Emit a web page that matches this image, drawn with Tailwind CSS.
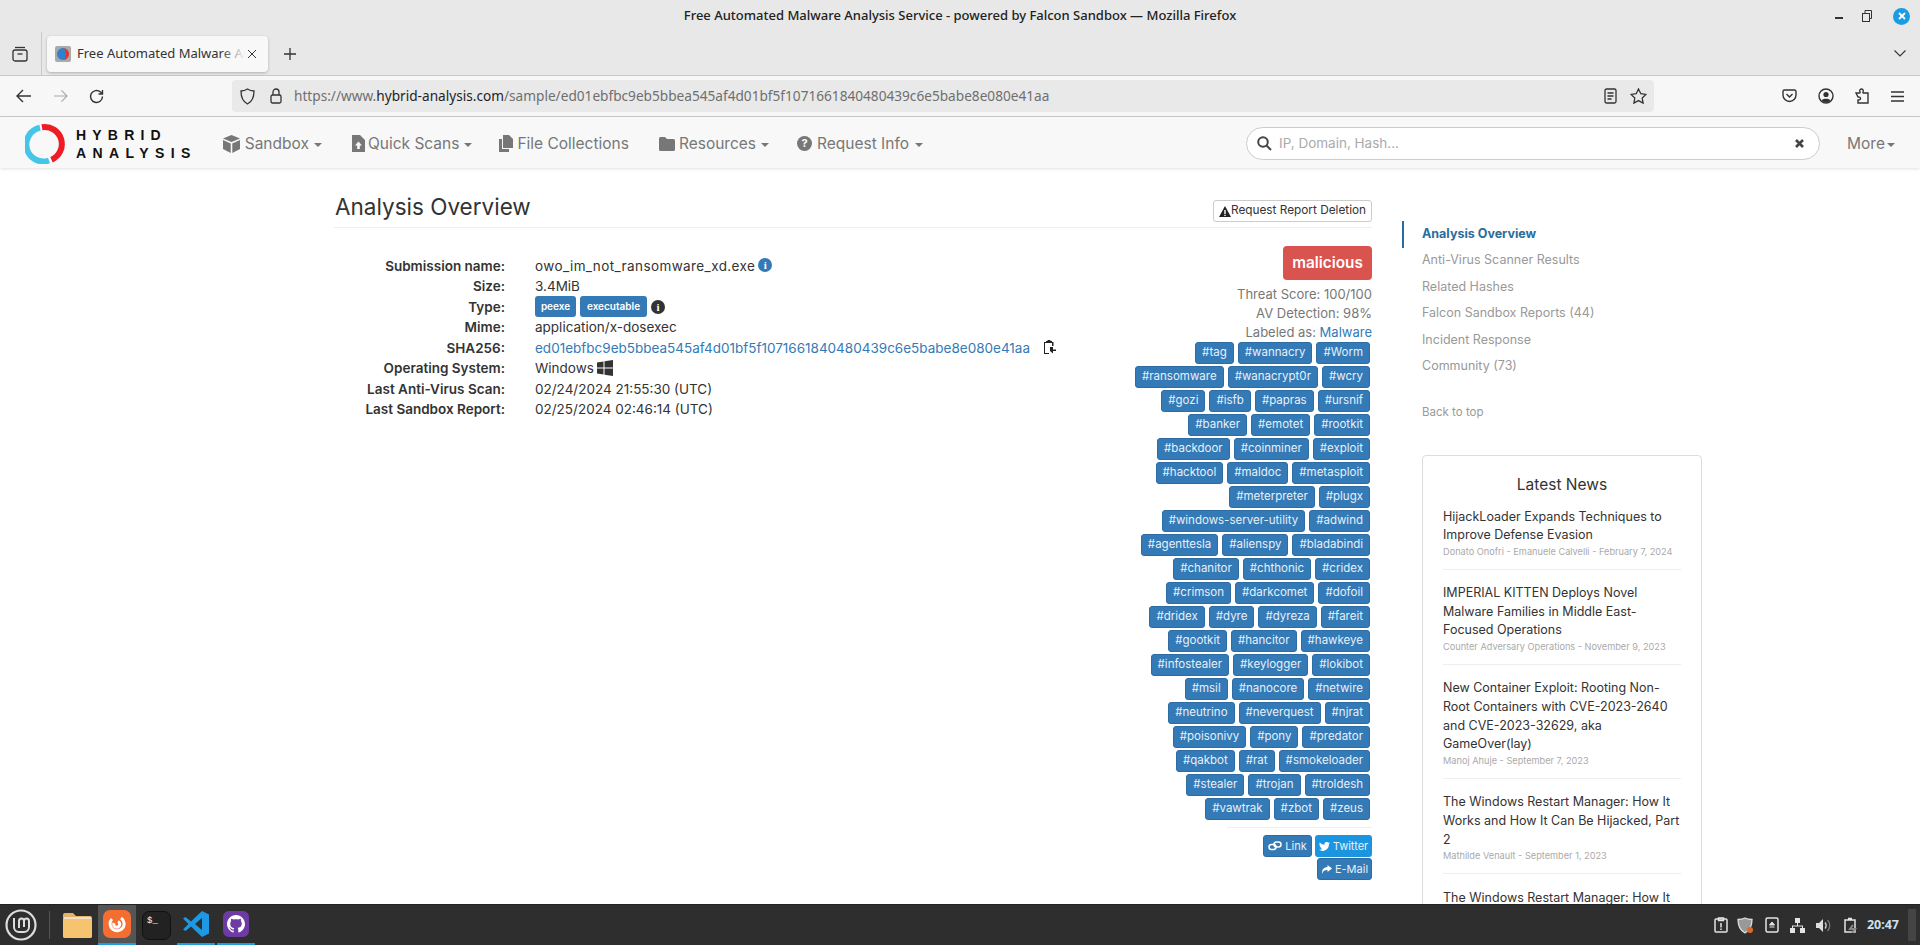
<!DOCTYPE html>
<html lang="en">
<head>
<meta charset="UTF-8">
<title>Free Automated Malware Analysis Service - powered by Falcon Sandbox</title>
<script src="https://cdn.jsdelivr.net/npm/@tailwindcss/browser@4"></script>
</head>
<body class="h-[945px] w-[1920px] overflow-hidden flex flex-col bg-white font-['Inter',sans-serif] text-[#333]">

<!-- window title + tabs -->
<div class="h-[76px] shrink-0 bg-[#e8e8e8] border-b border-[#c9c9c9] font-['Noto_Sans',sans-serif] flex flex-col">
  <div class="h-[32px] grid grid-cols-[1fr_auto_1fr] items-center">
    <div></div>
    <div class="text-[13px] font-medium text-[#222] whitespace-nowrap">Free Automated Malware Analysis Service - powered by Falcon Sandbox — Mozilla Firefox</div>
    <div class="flex items-center justify-end pr-[10px] gap-[19px]">
      <div class="w-[8px] h-[1.5px] bg-[#333] mt-[4px]"></div>
      <svg width="10" height="12" viewBox="0 0 10 12" fill="none" stroke="#333" stroke-width="1"><rect x="0.5" y="3.5" width="7" height="8"/><path d="M3 3V.5h6.5v8H8"/></svg>
      <div class="w-[17px] h-[17px] ml-[2px] rounded-full bg-[#1c9ce0] text-white flex items-center justify-center">
        <svg width="8" height="8" viewBox="0 0 8 8" stroke="#fff" stroke-width="1.8"><path d="M1 1l6 6M7 1L1 7"/></svg>
      </div>
    </div>
  </div>
  <div class="flex-1 flex items-start">
    <div class="w-[42px] h-[43px] border-r border-[#c9c9c9] flex items-center pl-[12px]">
      <svg width="16" height="16" viewBox="0 0 16 16" fill="none" stroke="#333" stroke-width="1.3"><path d="M3 1.5h10"/><rect x="1" y="4" width="14" height="11" rx="2"/><path d="M5.5 8h5"/></svg>
    </div>
    <div class="ml-[5px] mt-[4px] w-[221px] h-[36px] bg-[#f8f8f8] rounded-[4px] shadow-[0_1px_3px_rgba(0,0,0,0.25)] flex items-center pl-[8px]">
      <div class="w-[16px] h-[16px] bg-[#aaa] rounded-[2px] flex items-center justify-center">
        <div class="w-[12px] h-[12px] rounded-full bg-[#2f82c9] border-r-[3px] border-[#e5322d]"></div>
      </div>
      <div class="relative w-[168px] ml-[6px] overflow-hidden whitespace-nowrap text-[13px] text-[#333]">Free Automated Malware Analysis<div class="absolute right-0 top-0 h-full w-[24px] bg-gradient-to-r from-transparent to-[#f8f8f8]"></div></div>
      <svg class="ml-[2px]" width="10" height="10" viewBox="0 0 10 10" stroke="#333" stroke-width="1"><path d="M1 1l8 8M9 1L1 9"/></svg>
    </div>
    <svg class="ml-[15px] mt-[15px]" width="14" height="14" viewBox="0 0 14 14" stroke="#333" stroke-width="1.3"><path d="M7 1v12M1 7h12"/></svg>
    <svg class="ml-auto mr-[14px] mt-[18px]" width="12" height="7" viewBox="0 0 12 7" fill="none" stroke="#333" stroke-width="1.1"><path d="M.5.5L6 6l5.5-5.5"/></svg>
  </div>
</div>

<!-- url toolbar -->
<div class="h-[41px] shrink-0 bg-[#f7f7f7] border-b border-[#c9c9c9] flex items-center font-['Noto_Sans',sans-serif]">
  <svg class="ml-[16px]" width="16" height="14" viewBox="0 0 16 14" fill="none" stroke="#333" stroke-width="1.4"><path d="M15 7H1.5M7 1L1 7l6 6"/></svg>
  <svg class="ml-[21px]" width="15" height="14" viewBox="0 0 16 14" fill="none" stroke="#aaa" stroke-width="1.3"><path d="M1 7h13.5M9 1l6 6-6 6"/></svg>
  <svg class="ml-[21px]" width="15" height="15" viewBox="0 0 15 15" fill="none" stroke="#333" stroke-width="1.4"><path d="M13.5 7.5a6 6 0 1 1-2-4.5L13.5 5M13.5 1v4h-4"/></svg>
  <div class="ml-[128px] w-[1422px] h-[32px] bg-[#e9e9e9] rounded-[4px] flex items-center pl-[8px]">
    <svg width="15" height="17" viewBox="0 0 15 17" fill="none" stroke="#333" stroke-width="1.3"><path d="M7.5 1C5.5 2.3 3.5 3 1 3c0 6 1.500 10.500 6.500 13C12.500 13.500 14 9 14 3c-2.500 0-4.500-.7-6.500-2z"/></svg>
    <svg class="ml-[15px]" width="12" height="16" viewBox="0 0 12 16" fill="none" stroke="#333" stroke-width="1.3"><rect x="1" y="7" width="10" height="8" rx="1.500"/><path d="M3 7V4a3 3 0 0 1 6 0v3"/></svg>
    <div class="ml-[12px] text-[13.650px] text-[#6f6f6f] whitespace-nowrap">https://www.<span class="text-[#1f1f1f]">hybrid-analysis.com</span>/sample/ed01ebfbc9eb5bbea545af4d01bf5f1071661840480439c6e5babe8e080e41aa</div>
    <svg class="ml-auto" width="13" height="16" viewBox="0 0 13 16" fill="none" stroke="#333" stroke-width="1.3"><rect x="1" y="1" width="11" height="14" rx="1.500"/><path d="M3.500 5h6M3.500 8h6M3.500 11h4"/></svg>
    <svg class="ml-[13px] mr-[7px]" width="17" height="16" viewBox="0 0 17 16" fill="none" stroke="#333" stroke-width="1.3"><path d="M8.500 1l2.300 4.700 5.200.7-3.800 3.600.9 5.100-4.600-2.500-4.600 2.500.9-5.100L1 6.400l5.200-.7z"/></svg>
  </div>
  <svg class="ml-[128px]" width="15" height="14" viewBox="0 0 15 14" fill="none" stroke="#333" stroke-width="1.4"><path d="M1 2.500A1.500 1.500 0 0 1 2.500 1h10A1.500 1.500 0 0 1 14 2.500V6a6.500 6.500 0 0 1-13 0z"/><path d="M4.500 5l3 3 3-3"/></svg>
  <svg class="ml-[21px]" width="16" height="16" viewBox="0 0 16 16"><circle cx="8" cy="8" r="7" fill="none" stroke="#333" stroke-width="1.4"/><circle cx="8" cy="6.500" r="2.600" fill="#333"/><path d="M3.500 12.500c1-2.500 8-2.500 9 0a6 6 0 0 1-9 0z" fill="#333"/></svg>
  <svg class="ml-[21px]" width="14" height="16" viewBox="0 0 14 16" fill="none" stroke="#333" stroke-width="1.4"><path d="M1 5h3.500c.7 0 .7-.8.400-1.500C4.400 2 5.500 1 6.500 1s2.100 1 1.600 2.500C7.800 4.200 7.800 5 8.500 5H13v10H3v-3c1.500.3 2.500-.5 2.500-1.500S4.500 8.700 3 9z"/></svg>
  <svg class="ml-[22px]" width="13" height="11" viewBox="0 0 13 11" stroke="#333" stroke-width="1.300"><path d="M0 1h13M0 5.500h13M0 10h13"/></svg>
</div>

<!-- site nav -->
<div class="relative z-10 h-[51px] shrink-0 bg-[#f8f8f8] shadow-[0_1px_3px_rgba(0,0,0,0.12)] flex items-center text-[#777] text-[15.500px] pt-[2px]">
  <svg class="ml-[25px]" width="40" height="40" viewBox="0 0 40 40" fill="none" stroke-width="6"><path d="M15 3.800A17 17 0 1 0 24 36.500" stroke="#45c6e8"/><path d="M17 3.300A17 17 0 0 1 26.500 35.700" stroke="#ee1c25"/></svg>
  <div class="ml-[11px] font-['Liberation_Sans',sans-serif] font-bold text-[#111] text-[14px] leading-[18px] tracking-[6.200px]">
    <div>HYBRID</div>
    <div class="tracking-[6.400px]">ANALYSIS</div>
  </div>
  <svg class="ml-[26px]" width="17" height="18" viewBox="0 0 17 18" fill="#777"><path d="M8.500 0L17 3.500 8.500 7 0 3.500z"/><path d="M0 5v9l7.700 4V8.500zM17 5v9l-7.700 4V8.500z"/></svg>
  <span class="ml-[5px]">Sandbox</span><span class="ml-[5px] mt-[2px] border-x-[4px] border-t-[4px] border-x-transparent border-t-[#777]"></span>
  <svg class="ml-[30px]" width="13" height="17" viewBox="0 0 13 17" fill="#777"><path fill-rule="evenodd" d="M0 0h8l5 5v12H0zM6.500 6.500L3 10.500h2.200V14h2.600v-3.500H10z"/></svg>
  <span class="ml-[3px]">Quick Scans</span><span class="ml-[5px] mt-[2px] border-x-[4px] border-t-[4px] border-x-transparent border-t-[#777]"></span>
  <svg class="ml-[27px]" width="14" height="17" viewBox="0 0 14 17" fill="#777"><path d="M4 0h6l4 4v9H4z"/><path d="M0 4h3v10h7v3H0z"/></svg>
  <span class="ml-[4px]">File Collections</span>
  <svg class="ml-[30px]" width="16" height="14" viewBox="0 0 16 14" fill="#777"><path d="M1.500 0h4.500l2 2h6.500A1.500 1.500 0 0 1 16 3.500v9a1.500 1.500 0 0 1-1.500 1.500h-13A1.500 1.500 0 0 1 0 12.500v-11A1.500 1.500 0 0 1 1.500 0z"/></svg>
  <span class="ml-[4px]">Resources</span><span class="ml-[5px] mt-[2px] border-x-[4px] border-t-[4px] border-x-transparent border-t-[#777]"></span>
  <span class="ml-[28px] w-[15px] h-[15px] rounded-full bg-[#777] text-white text-[11px] font-bold flex items-center justify-center">?</span>
  <span class="ml-[5px]">Request Info</span><span class="ml-[6px] mt-[2px] border-x-[4px] border-t-[4px] border-x-transparent border-t-[#777]"></span>
  <div class="ml-[323px] w-[574px] h-[33px] bg-white border border-[#ccc] rounded-full flex items-center pl-[10px] pr-[15px] text-[13.500px] text-[#aaa]">
    <svg width="15" height="15" viewBox="0 0 15 15" fill="none" stroke="#444" stroke-width="2"><circle cx="6" cy="6" r="4.800"/><path d="M9.500 9.500l4.500 4.500"/></svg>
    <span class="ml-[7px]">IP, Domain, Hash...</span>
    <svg class="ml-auto" width="9" height="9" viewBox="0 0 9 9" stroke="#444" stroke-width="2.600"><path d="M1 1l7 7M8 1L1 8"/></svg>
  </div>
  <span class="ml-[27px]">More</span><span class="ml-[2px] mt-[2px] border-x-[4px] border-t-[4px] border-x-transparent border-t-[#777]"></span>
</div>

<!-- page -->
<div class="flex-1 min-h-0 overflow-hidden flex pl-[334px]">
  <div class="w-[1038px] shrink-0">
    <div class="h-[60px] border-b border-[#eee] flex justify-between">
      <h1 class="ml-[1px] mt-[23px] text-[22.500px] leading-[32px] text-[#333]">Analysis Overview</h1>
      <button class="mt-[32px] h-[22px] w-[159px] border border-[#ccc] rounded-[3px] bg-white text-[11.800px] text-[#333] flex items-center justify-center">
        <svg width="12" height="11" viewBox="0 0 12 11"><path fill-rule="evenodd" d="M6 0l6 11H0zM5.300 4v4h1.400V4zM5.300 8.700v1.200h1.400V8.700z" fill="#222"/></svg>Request Report Deletion
      </button>
    </div>
    <div class="flex justify-between">
      <div class="mt-[27.500px] grid grid-cols-[171px_auto] gap-x-[30px] auto-rows-[20.500px] items-center text-[13.500px] h-fit">
        <div class="text-right font-semibold">Submission name:</div>
        <div class="flex items-center gap-[3px]"><span class="tracking-[0.400px]">owo_im_not_ransomware_xd.exe</span> <span class="w-[14px] h-[14px] mb-[2px] rounded-full bg-[#337ab7] text-white text-[11px] font-bold flex items-center justify-center font-['Liberation_Serif',serif]">i</span></div>
        <div class="text-right font-semibold">Size:</div>
        <div>3.4MiB</div>
        <div class="text-right font-semibold">Type:</div>
        <div class="flex items-center gap-[4px]">
          <span class="h-[21px] w-[41px] bg-[#337ab7] rounded-[3px] text-white text-[10px] font-semibold flex items-center justify-center">peexe</span>
          <span class="h-[21px] w-[67px] bg-[#337ab7] rounded-[3px] text-white text-[10px] font-semibold flex items-center justify-center">executable</span>
          <span class="w-[14px] h-[14px] mt-[1px] rounded-full bg-[#333] text-white text-[11px] font-bold flex items-center justify-center font-['Liberation_Serif',serif]">i</span>
        </div>
        <div class="text-right font-semibold">Mime:</div>
        <div>application/x-dosexec</div>
        <div class="text-right font-semibold">SHA256:</div>
        <div class="flex items-center text-[#337ab7] whitespace-nowrap">ed01ebfbc9eb5bbea545af4d01bf5f1071661840480439c6e5babe8e080e41aa
          <svg class="ml-[13px]" width="13" height="15" viewBox="0 0 13 15"><path fill-rule="evenodd" d="M3 1h1.500a1.500 1.500 0 0 1 3 0H9v1h1.500v4H9V3H2v10h4v1H1V2h2z" fill="#222"/><path d="M7 7h3v2.500h3v1.500h-3v2.500L7 11z" fill="#222"/></svg>
        </div>
        <div class="text-right font-semibold">Operating System:</div>
        <div class="flex items-center gap-[3px]">Windows
          <svg width="16" height="16" viewBox="0 0 16 16" fill="#333"><path d="M0 2.500l6.500-1v6H0zM7.500 1.300L16 0v7.500H7.500zM0 8.500h6.500v6l-6.500-1zM7.500 8.500H16V16l-8.500-1.300z"/></svg>
        </div>
        <div class="text-right font-semibold">Last Anti-Virus Scan:</div>
        <div>02/24/2024 21:55:30 (UTC)</div>
        <div class="text-right font-semibold">Last Sandbox Report:</div>
        <div>02/25/2024 02:46:14 (UTC)</div>
      </div>
      <div class="mt-[18px] w-[260px] flex flex-col items-end">
        <div class="h-[34px] w-[89px] bg-[#d9534f] rounded-[4px] text-white text-[15.300px] font-semibold flex items-center justify-center">malicious</div>
        <div class="mt-[5px] text-right text-[13px] leading-[19px] text-[#777] whitespace-nowrap">
          <div>Threat Score: 100/100</div>
          <div>AV Detection: 98%</div>
          <div>Labeled as: <span class="text-[#337ab7]">Malware</span></div>
        </div>
        <div id="tags" class="mt-[0px] pr-[2px] flex flex-col items-end gap-[2px]"></div>
        <div class="mt-[7px] w-[145px] border-t border-[#eee]"></div>
        <div class="mt-[7px] flex gap-[3px] text-[11px] text-[#e8f0f7]">
          <span class="h-[22px] w-[49px] bg-[#337ab7] border border-[#2e6da4] rounded-[3px] flex items-center justify-center gap-[3px]">
            <svg width="14" height="10" viewBox="0 0 14 10" fill="none" stroke="#fff" stroke-width="1.500"><rect x="1" y="3.500" width="7" height="5" rx="2.500"/><rect x="6" y="1" width="7" height="5" rx="2.500"/></svg>Link</span>
          <span class="h-[22px] w-[57px] bg-[#1b95e0] rounded-[3px] flex items-center justify-center gap-[3px]">
            <svg width="11" height="9" viewBox="0 0 11 9" fill="#fff"><path d="M11 1.100c-.4.200-.8.300-1.300.4.500-.3.800-.7 1-1.200-.4.300-.9.400-1.400.5A2.200 2.200 0 0 0 5.500 2.800 6.400 6.400 0 0 1 .8.400a2.200 2.200 0 0 0 .7 3c-.4 0-.7-.1-1-.3 0 1.100.8 2 1.800 2.200-.3.100-.7.100-1 0 .3.900 1.100 1.500 2.100 1.500A4.500 4.500 0 0 1 0 7.800 6.400 6.400 0 0 0 9.900 2.200c.4-.3.800-.7 1.100-1.100z"/></svg>Twitter</span>
        </div>
        <span class="mt-[1px] h-[22px] w-[55px] bg-[#337ab7] border border-[#2e6da4] rounded-[3px] flex items-center justify-center gap-[3px] text-[11px] text-[#e8f0f7]">
          <svg width="11" height="9" viewBox="0 0 11 9" fill="#fff"><path d="M6.500 0L11 3.500 6.500 7V5C3.500 5 2 5.800 1.500 9 .5 5.500 2 2.300 6.500 2z"/></svg>E-Mail</span>
      </div>
    </div>
  </div>

  <div class="ml-[30px] w-[300px] shrink-0 pt-[52.500px]">
    <div id="toc" class="text-[12.500px] text-[#999]">
      <div class="h-[27px] border-l-2 border-[#2a6d9e] pl-[18px] flex items-center font-bold text-[#2a6d9e]">Analysis Overview</div>
      <div class="h-[26.500px] pl-[20px] flex items-center">Anti-Virus Scanner Results</div>
      <div class="h-[26.500px] pl-[20px] flex items-center">Related Hashes</div>
      <div class="h-[26.500px] pl-[20px] flex items-center">Falcon Sandbox Reports (44)</div>
      <div class="h-[26.500px] pl-[20px] flex items-center">Incident Response</div>
      <div class="h-[26.500px] pl-[20px] flex items-center">Community (73)</div>
      <div class="mt-[19.500px] h-[26px] pl-[20px] flex items-center text-[11.500px]">Back to top</div>
    </div>
    <div class="mt-[29px] ml-[20px] w-[280px] border border-[#ddd] rounded-[4px] px-[20px] pt-[18px]">
      <div class="text-center text-[15.500px] leading-[22px] text-[#333]">Latest News</div>
      <div class="mt-[12px] text-[12.500px] leading-[18.600px] text-[#333]">
        <div class="pb-[10px] mb-[14.500px] border-b border-[#eee]">HijackLoader Expands Techniques to<br>Improve Defense Evasion<div class="text-[9.200px] leading-[14px] text-[#aaa]">Donato Onofri - Emanuele Calvelli - February 7, 2024</div></div>
        <div class="pb-[10px] mb-[14.500px] border-b border-[#eee]">IMPERIAL KITTEN Deploys Novel<br>Malware Families in Middle East-<br>Focused Operations<div class="text-[9.200px] leading-[14px] text-[#aaa]">Counter Adversary Operations - November 9, 2023</div></div>
        <div class="pb-[10px] mb-[14.500px] border-b border-[#eee]">New Container Exploit: Rooting Non-<br>Root Containers with CVE-2023-2640<br>and CVE-2023-32629, aka<br>GameOver(lay)<div class="text-[9.200px] leading-[14px] text-[#aaa]">Manoj Ahuje - September 7, 2023</div></div>
        <div class="pb-[10px] mb-[14.500px] border-b border-[#eee]">The Windows Restart Manager: How It<br>Works and How It Can Be Hijacked, Part<br>2<div class="text-[9.200px] leading-[14px] text-[#aaa]">Mathilde Venault - September 1, 2023</div></div>
        <div>The Windows Restart Manager: How It</div>
      </div>
    </div>
  </div>
</div>

<!-- taskbar -->
<div class="h-[41px] shrink-0 bg-[#2e2e2e] flex items-center border-t border-[#222]">
  <svg class="ml-[5px]" width="32" height="32" viewBox="0 0 32 32" fill="none" stroke="#ddd"><circle cx="16" cy="16" r="14.500" stroke-width="2.200"/><path d="M9 9v9a5 5 0 0 0 5 5h5a5 5 0 0 0 5-5v-6a2.500 2.500 0 0 0-5 0v6M14 19v-7a2.500 2.500 0 0 1 5 0" stroke-width="2"/></svg>
  <div class="ml-[12px] w-px h-[28px] bg-[#555]"></div>
  <svg class="ml-[13px]" width="29" height="25" viewBox="0 0 29 25"><path d="M0 2a2 2 0 0 1 2-2h8l3 3h14a2 2 0 0 1 2 2v18a2 2 0 0 1-2 2H2a2 2 0 0 1-2-2z" fill="#e5b565"/><path d="M0 6h29v17a2 2 0 0 1-2 2H2a2 2 0 0 1-2-2z" fill="#f6c36e"/><path d="M1 5h27" stroke="#eee" stroke-width="1.500"/></svg>
  <div class="ml-[6px] w-[38px] h-[40px] bg-[#555] border-b-2 border-[#1c9ce0] flex items-center justify-center">
    <div class="w-[28px] h-[28px] rounded-[7px] bg-[#f46e32] flex items-center justify-center">
      <svg width="18" height="18" viewBox="0 0 18 18" fill="none" stroke="#fff" stroke-width="3"><path d="M13 3a7 7 0 1 1-9 1M6 8a3 3 0 1 0 4-1.500"/></svg>
    </div>
  </div>
  <div class="ml-[6px] w-[29px] h-[29px] rounded-[7px] bg-[#222] border border-[#111] text-white text-[9px] leading-[10px] pl-[4px] pt-[4px] font-['Liberation_Mono',monospace]">$_</div>
  <div class="ml-[6px] w-[38px] h-[40px] border-b-2 border-[#1c9ce0] flex items-center justify-center">
    <svg width="28" height="28" viewBox="0 0 28 28"><path d="M20 1l7 3.500v19L20 27 9 16.500 3.500 21 1 19.500 6.500 14 1 8.500 3.500 7 9 11.500z" fill="#1c98e4"/><path d="M20 8l-7 6 7 6z" fill="#2e2e2e"/></svg>
  </div>
  <div class="ml-[2px] w-[38px] h-[40px] border-b-2 border-[#1c9ce0] flex items-center justify-center">
    <div class="w-[26px] h-[26px] rounded-[6px] bg-[#6e3aa3] flex items-center justify-center">
      <svg width="18" height="18" viewBox="0 0 16 16" fill="#fff"><path d="M8 0C3.600 0 0 3.600 0 8c0 3.500 2.300 6.500 5.500 7.600.4.100.5-.2.500-.4v-1.400c-2.200.5-2.700-1-2.700-1-.4-.9-.9-1.200-.9-1.200-.7-.5.100-.5.100-.5.800.1 1.200.8 1.200.8.700 1.200 1.900.9 2.300.7.100-.5.300-.9.500-1.100-1.800-.2-3.600-.9-3.600-4 0-.9.300-1.600.8-2.100-.1-.2-.4-1 .1-2.100 0 0 .7-.2 2.200.8.600-.2 1.300-.3 2-.3s1.400.1 2 .3c1.500-1 2.200-.8 2.200-.8.400 1.100.2 1.900.1 2.100.5.600.8 1.300.8 2.100 0 3.100-1.900 3.700-3.700 3.900.3.300.6.800.6 1.500v2.200c0 .2.100.5.600.4C13.700 14.500 16 11.500 16 8c0-4.400-3.600-8-8-8z"/></svg>
    </div>
  </div>

  <div class="ml-auto flex items-center text-[#e4e4e4]">
    <svg width="14" height="16" viewBox="0 0 14 16" fill="none" stroke="currentColor" stroke-width="1.500"><rect x="1" y="2" width="12" height="13" rx="1"/><path d="M4.500 1h5v2.500h-5zM7 6v4.500M7 11.500v1.500"/></svg>
    <svg class="ml-[9px]" width="17" height="17" viewBox="0 0 17 17"><path d="M8 1C6 2 3.500 2.500 1 2.500c0 6 1.500 10.500 7 13.500 5.500-3 7-7.500 7-13.500C12.500 2.500 10 2 8 1z" fill="#999" stroke="#ddd" stroke-width="1.300"/><circle cx="13" cy="13" r="3" fill="#e0672a"/></svg>
    <svg class="ml-[11px]" width="14" height="16" viewBox="0 0 14 16" fill="none" stroke="currentColor" stroke-width="1.500"><rect x="1" y="1" width="12" height="14" rx="1.500"/><path d="M7 5L4.500 8h5zM4.500 10h5" fill="currentColor" stroke-width="1"/></svg>
    <svg class="ml-[11px]" width="15" height="15" viewBox="0 0 15 15" fill="currentColor"><rect x="5" y="0" width="5" height="5"/><rect x="0" y="10" width="5" height="5"/><rect x="10" y="10" width="5" height="5"/><path d="M7 5h1v2.500h5V10h-1V8.500H3V10H2V7.500h5z"/></svg>
    <svg class="ml-[11px]" width="15" height="15" viewBox="0 0 15 15" fill="none"><path d="M0 5h3l4-4v13l-4-4H0z" fill="#ddd"/><path d="M9 4.500c1.500 1.500 1.500 4.500 0 6" stroke="#ddd" stroke-width="1.300"/><path d="M11.500 2c3 3 3 8 0 11" stroke="#777" stroke-width="1.300"/></svg>
    <svg class="ml-[13px]" width="14" height="16" viewBox="0 0 14 16" fill="none" stroke="currentColor" stroke-width="1.500"><path d="M4 1.500h4M1 3h10v12H1z"/><path d="M9 8l-3 4h5l-3 4" stroke="#888" stroke-width="2"/></svg>
    <span class="ml-[9px] text-[12.500px] font-bold text-[#cfe0ef] font-['Noto_Sans',sans-serif]">20:47</span>
    <div class="ml-[9px] mr-[4px] w-[8px] h-[32px] bg-[#444]"></div>
  </div>
</div>

<script>
  const tagRows = [
    ['tag', 'wannacry', 'Worm'],
    ['ransomware', 'wanacrypt0r', 'wcry'],
    ['gozi', 'isfb', 'papras', 'ursnif'],
    ['banker', 'emotet', 'rootkit'],
    ['backdoor', 'coinminer', 'exploit'],
    ['hacktool', 'maldoc', 'metasploit'],
    ['meterpreter', 'plugx'],
    ['windows-server-utility', 'adwind'],
    ['agenttesla', 'alienspy', 'bladabindi'],
    ['chanitor', 'chthonic', 'cridex'],
    ['crimson', 'darkcomet', 'dofoil'],
    ['dridex', 'dyre', 'dyreza', 'fareit'],
    ['gootkit', 'hancitor', 'hawkeye'],
    ['infostealer', 'keylogger', 'lokibot'],
    ['msil', 'nanocore', 'netwire'],
    ['neutrino', 'neverquest', 'njrat'],
    ['poisonivy', 'pony', 'predator'],
    ['qakbot', 'rat', 'smokeloader'],
    ['stealer', 'trojan', 'troldesh'],
    ['vawtrak', 'zbot', 'zeus']
  ];
  const tags = document.getElementById('tags');
  tagRows.forEach(row => {
    const div = document.createElement('div');
    div.className = 'flex justify-end gap-[4px]';
    row.forEach(t => {
      const a = document.createElement('span');
      a.className = 'h-[22px] px-[6px] bg-[#337ab7] border border-[#2e6da4] rounded-[3px] text-[11.500px] text-[#e8f0f7] flex items-center whitespace-nowrap';
      a.textContent = '#' + t;
      div.appendChild(a);
    });
    tags.appendChild(div);
  });
</script>
</body>
</html>
